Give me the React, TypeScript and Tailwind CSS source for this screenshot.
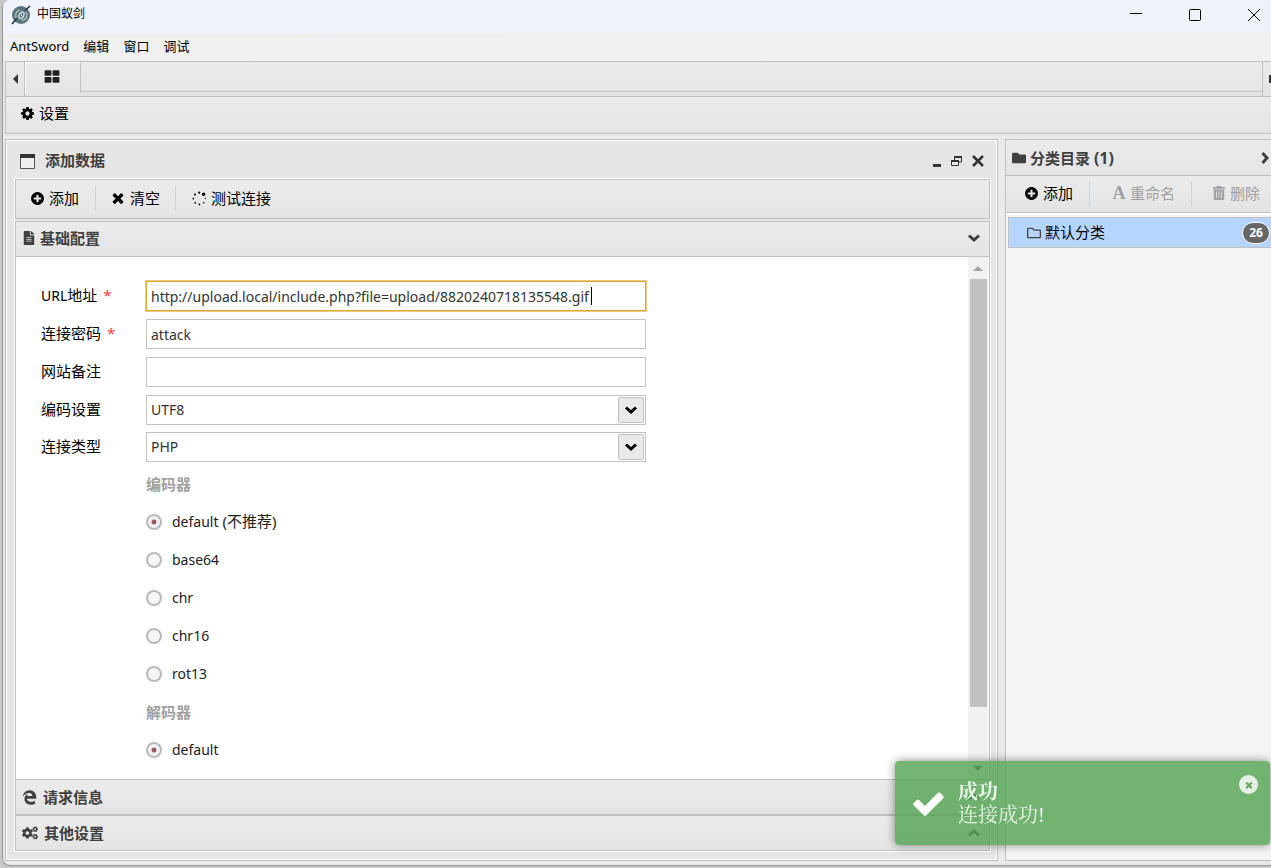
import React from "react";
import {
  FaCogs,
  FaEdgeLegacy,
  FaFileAlt,
  FaFolder,
  FaRegFolder,
  FaTrashAlt,
} from "react-icons/fa";

const paths = {
  times:
    "M1490 1322q0 40-28 68l-136 136q-28 28-68 28t-68-28l-294-294-294 294q-28 28-68 28t-68-28l-136-136q-28-28-28-68t28-68l294-294-294-294q-28-28-28-68t28-68l136-136q28-28 68-28t68 28l294 294 294-294q28-28 68-28t68 28l136 136q28 28 28 68t-28 68l-294 294 294 294q28 28 28 68z",
  plus: "M1344 960v-128q0-26-19-45t-45-19h-256v-256q0-26-19-45t-45-19h-128q-26 0-45 19t-19 45v256h-256q-26 0-45 19t-19 45v128q0 26 19 45t45 19h256v256q0 26 19 45t45 19h128q26 0 45-19t19-45v-256h256q26 0 45-19t19-45zm320-64q0 209-103 385.5t-279.5 279.5-385.5 103-385.5-103-279.5-279.5-103-385.5 103-385.5 279.5-279.5 385.5-103 385.5 103 279.5 279.5 103 385.5z",
  tiles:
    "M832 1024v384q0 52-38 90t-90 38h-512q-52 0-90-38t-38-90v-384q0-52 38-90t90-38h512q52 0 90 38t38 90zm0-768v384q0 52-38 90t-90 38h-512q-52 0-90-38t-38-90v-384q0-52 38-90t90-38h512q52 0 90 38t38 90zm896 768v384q0 52-38 90t-90 38h-512q-52 0-90-38t-38-90v-384q0-52 38-90t90-38h512q52 0 90 38t38 90zm0-768v384q0 52-38 90t-90 38h-512q-52 0-90-38t-38-90v-384q0-52 38-90t90-38h512q52 0 90 38t38 90z",
  cog: "M1152 896q0-106-75-181t-181-75-181 75-75 181 75 181 181 75 181-75 75-181zm512-109v222q0 12-8 23t-20 13l-185 28q-19 54-39 91 35 50 107 138 10 12 10 25t-9 23q-27 37-99 108t-94 71q-12 0-26-9l-138-108q-44 23-91 38-16 136-29 186-7 28-36 28h-222q-14 0-24.5-8.5t-11.5-21.5l-28-184q-49-16-90-37l-141 107q-10 9-25 9-14 0-25-11-126-114-165-168-7-10-7-23 0-12 8-23 15-21 51-66.5t54-70.5q-27-50-41-99l-183-27q-13-2-21-12.5t-8-23.5v-222q0-12 8-23t19-13l186-28q14-46 39-92-40-57-107-138-10-12-10-24 0-10 9-23 26-36 98.5-107.5t94.5-71.5q13 0 26 10l138 107q44-23 91-38 16-136 29-186 7-28 36-28h222q14 0 24.5 8.5t11.5 21.5l28 184q49 16 90 37l142-107q9-9 24-9 13 0 25 10 129 119 165 170 7 8 7 22 0 12-8 23-15 21-51 66.5t-54 70.5q26 50 41 98l183 28q13 2 21 12.5t8 23.5z",
  check:
    "M1671 566q0 40-28 68l-724 724-136 136q-28 28-68 28t-68-28l-136-136-362-362q-28-28-28-68t28-68l136-136q28-28 68-28t68 28l294 295 656-657q28-28 68-28t68 28l136 136q28 28 28 68z",
};

function Icon({ name, className }: { name: keyof typeof paths; className?: string }) {
  return (
    <svg viewBox="0 0 1792 1792" fill="currentColor" className={className} aria-hidden="true">
      <path d={paths[name]} />
    </svg>
  );
}

function Chevron({ className }: { className?: string }) {
  return (
    <svg viewBox="0 0 12 8" fill="none" stroke="currentColor" strokeWidth="3" className={className} aria-hidden="true">
      <path d="M1 1.5 6 6l5-4.5" />
    </svg>
  );
}

function Spinner() {
  return (
    <svg viewBox="0 0 15 15" fill="currentColor" className="size-[15px]" aria-hidden="true">
      <circle cx="11.6" cy="3.2" r="1.7" />
      <circle cx="7.2" cy="1.7" r="1.1" />
      <circle cx="3" cy="3.4" r="1" />
      <circle cx="1.3" cy="7.6" r=".9" />
      <circle cx="3.2" cy="11.8" r=".9" />
      <circle cx="7.4" cy="13.4" r=".9" />
      <circle cx="11.7" cy="11.8" r=".8" />
      <circle cx="13.4" cy="7.6" r=".7" />
    </svg>
  );
}

function Logo() {
  return (
    <svg viewBox="0 0 20 20" className="size-5" aria-hidden="true">
      <circle cx="10" cy="10" r="9" fill="#5b7580" />
      <path d="M6 14A5.5 5.5 0 0 1 9 5M11 15.5a5.5 5.5 0 0 0 4-8.5" fill="none" stroke="#b9c8ce" strokeWidth="1.2" />
      <ellipse cx="10.5" cy="10" rx="2.3" ry="3.5" fill="none" stroke="#d5e0e4" strokeWidth="1.3" transform="rotate(25 10 10)" />
      <path d="M1 19 6 13M14 5.500 19 1" stroke="#26343a" strokeWidth="1.6" />
      <path d="M10.5 8.5v3" stroke="#d5e0e4" />
    </svg>
  );
}

const menus = ["AntSword", "编辑", "窗口", "调试"];
const encoders = [
  { name: "default", note: "不推荐" },
  { name: "base64" },
  { name: "chr" },
  { name: "chr16" },
  { name: "rot13" },
];
const decoders = [{ name: "default" }];

const bar = "bg-linear-to-b from-[#ebebeb] to-[#e4e4e4] border-[#c0c0c0]";

function Divider() {
  return <span className="h-[25px] w-px bg-[#c7d3da]" />;
}

type FieldProps = {
  id: string;
  label: React.ReactNode;
  required?: boolean;
  value?: string;
  focused?: boolean;
};

function FieldLabel({ id, label, required }: FieldProps) {
  return (
    <label htmlFor={id} className="w-[105px] shrink-0 text-[15px] text-black">
      {label}
      {required && <span className="ml-1.5 text-[#ff4040]">*</span>}
    </label>
  );
}

function TextField(props: FieldProps) {
  return (
    <div className="flex h-[38px] items-center">
      <FieldLabel {...props} />
      {props.focused ? (
        <div className="relative">
          <input
            id={props.id}
            defaultValue={props.value}
            className="block h-[30px] w-[500px] border border-[#dfa82f] bg-white px-1 ring-1 ring-[#dfa82f]/60 outline-none"
          />
          <span className="absolute top-1.5 left-[445px] h-[18px] w-px bg-black" />
        </div>
      ) : (
        <input
          id={props.id}
          defaultValue={props.value}
          className="h-[30px] w-[500px] border border-[#c0c0c0] bg-white px-1 outline-none"
        />
      )}
    </div>
  );
}

function SelectField(props: FieldProps) {
  return (
    <div className="flex h-[37px] items-center">
      <FieldLabel {...props} />
      <div className="relative">
        <select
          id={props.id}
          className="block h-[30px] w-[500px] appearance-none border border-[#c0c0c0] bg-white px-1 outline-none"
        >
          <option>{props.value}</option>
        </select>
        <span className="pointer-events-none absolute top-0.5 right-0.5 grid h-[26px] w-[26px] place-items-center rounded-xs border border-[#c0c0c0] bg-[#e9e9e9] text-black">
          <Chevron className="h-2 w-3" />
        </span>
      </div>
    </div>
  );
}

type Coder = { name: string; note?: string };

function RadioGroup({ title, name, items }: { title: string; name: string; items: Coder[] }) {
  return (
    <fieldset className="pl-[105px]">
      <legend className="h-[38px] text-[15px] leading-[38px] font-bold text-[#a0a0a0]">{title}</legend>
      {items.map((item, i) => (
        <label key={item.name} className="flex h-[38px] items-center gap-2.5 text-[#222]">
          <input
            type="radio"
            name={name}
            defaultChecked={i === 0}
            className="size-4 appearance-none rounded-full border-2 border-[#bdb8bb] bg-[#f5f5f5] checked:bg-[radial-gradient(#95585b_2px,#f0f2f6_3px)]"
          />
          <span>
            {item.name}
            {item.note && <span className="text-[15px]"> ({item.note})</span>}
          </span>
        </label>
      ))}
    </fieldset>
  );
}

function AddPanel() {
  return (
    <section className="flex min-w-0 flex-1 flex-col border border-[#c0c0c0] bg-[#e6e6e6] p-px ring-1 ring-white ring-inset">
      <header className="flex h-[37px] shrink-0 items-center pt-0.5 pr-3 pl-[13px] font-bold text-[#404040]">
        <svg viewBox="0 0 15 15" className="mt-0.5 mr-2.5 size-[15px]" aria-hidden="true">
          <path d="M.5.5h14v14H.5z" fill="#efefef" stroke="#555" />
          <path d="M0 0h15v4H0z" fill="#333" />
        </svg>
        <h2 className="flex-1">添加数据</h2>
        <div className="flex items-center gap-2.5 text-[#333]">
          <button aria-label="最小化" className="flex h-3 w-2 items-end">
            <span className="h-[3px] w-full bg-current" />
          </button>
          <button aria-label="还原">
            <svg viewBox="0 0 11 10" className="h-2.5 w-[11px]" fill="none" stroke="currentColor" aria-hidden="true">
              <path d="M3.5 4V1h7v5H8M.5 4.5h7v5h-7z" />
              <path d="M3 1h8M0 5h8" strokeWidth="2" />
            </svg>
          </button>
          <button aria-label="关闭">
            <svg viewBox="0 0 12 12" className="size-3" stroke="currentColor" strokeWidth="2.5" aria-hidden="true">
              <path d="m1 1 10 10M11 1 1 11" />
            </svg>
          </button>
        </div>
      </header>
      <div className="mr-[5px] mb-[7px] ml-[7px] flex min-h-0 flex-1 flex-col border border-white">
        <div className={`flex h-10 shrink-0 items-center border px-3.5 pb-0.5 text-black ${bar}`}>
          <button className="flex items-center gap-1 pr-4">
            <Icon name="plus" className="size-[15px]" />
            添加
          </button>
          <Divider />
          <button className="flex items-center gap-1 pr-[15px] pl-3.5">
            <Icon name="times" className="size-4" />
            清空
          </button>
          <Divider />
          <button className="flex items-center gap-1 pl-4">
            <Spinner />
            测试连接
          </button>
        </div>
        <button className={`mt-0.5 flex h-9 shrink-0 items-center gap-1 border px-1.5 pb-0.5 font-bold text-[#404040] ${bar}`}>
          <FaFileAlt className="size-3.5" />
          基础配置
          <Chevron className="mr-[3px] ml-auto h-2 w-3" />
        </button>
        <div className="flex min-h-0 flex-1 border-x border-[#c0c0c0] bg-white">
          <form className="flex-1 overflow-hidden pt-5 pl-[25px] text-sm">
            <TextField
              id="url"
              label={
                <>
                  <span className="text-sm">URL</span>地址
                </>
              }
              required
              focused
              value="http://upload.local/include.php?file=upload/8820240718135548.gif"
            />
            <TextField id="pwd" label="连接密码" required value="attack" />
            <TextField id="note" label="网站备注" />
            <SelectField id="encode" label="编码设置" value="UTF8" />
            <SelectField id="type" label="连接类型" value="PHP" />
            <RadioGroup title="编码器" name="encoder" items={encoders} />
            <RadioGroup title="解码器" name="decoder" items={decoders} />
          </form>
          <div className="mr-px flex w-5 flex-col items-center bg-[#f1f1f1] pb-2">
            <span className="mt-[9px] border-x-5 border-b-5 border-x-transparent border-b-[#a3a3a3]" />
            <span className="mt-2 h-[428px] w-[17px] bg-[#c1c1c1]" />
            <span className="mt-auto border-x-5 border-t-5 border-x-transparent border-t-[#505050]" />
          </div>
        </div>
        <button className={`flex h-9 shrink-0 items-center gap-1.5 border px-1.5 font-bold text-[#404040] ${bar}`}>
          <FaEdgeLegacy className="size-[15px]" />
          请求信息
          <Chevron className="mr-[3px] ml-auto h-2 w-3 rotate-180" />
        </button>
        <button className={`flex h-9 shrink-0 items-center gap-1.5 border px-1.5 font-bold text-[#404040] ${bar}`}>
          <FaCogs className="size-4" />
          其他设置
          <Chevron className="mr-[3px] ml-auto h-2 w-3 rotate-180" />
        </button>
      </div>
    </section>
  );
}

function CategoryPanel() {
  return (
    <aside className="flex w-[266px] shrink-0 flex-col border border-r-0 border-[#c0c0c0] bg-[#f4f4f4]">
      <header className={`flex h-9 shrink-0 items-center gap-1 border-b pl-1.5 font-bold text-[#404040] ${bar}`}>
        <FaFolder className="size-3.5" />
        <h2 className="flex-1">
          分类目录 <span className="text-base">(1)</span>
        </h2>
        <Chevron className="h-2 w-3 -rotate-90" />
      </header>
      <div className={`flex h-[37px] shrink-0 items-center border-b pb-0.5 text-black ${bar}`}>
        <button className="flex items-center gap-1 pr-4 pl-[18px]">
          <Icon name="plus" className="size-[15px]" />
          添加
        </button>
        <Divider />
        <button disabled className="flex items-center gap-1 pr-4 pl-[22px] text-[#a0a0a0]">
          <span className="w-3.5 text-center font-['Liberation_Serif',serif] text-lg leading-5 font-bold" aria-hidden="true">
            A
          </span>
          重命名
        </button>
        <Divider />
        <button disabled className="flex items-center gap-1 pl-5 text-[#a0a0a0]">
          <FaTrashAlt className="size-3.5" />
          删除
        </button>
      </div>
      <ul className="border-t-2 border-white p-0.5 pr-0">
        <li className="flex h-[31px] items-center gap-1 border border-r-0 border-[#c0c0c0] bg-[#b5d5ff] pr-px pl-[18px] text-black">
          <FaRegFolder className="size-3.5 text-[#444]" />
          <span className="flex-1">默认分类</span>
          <span className="flex h-[22px] w-7 items-center justify-center rounded-full border border-white bg-[#666] text-xs font-bold text-white">
            26
          </span>
        </li>
      </ul>
    </aside>
  );
}

function Toast() {
  return (
    <div
      role="status"
      className="fixed right-px bottom-[23px] flex h-[84px] w-[375px] items-center rounded bg-[#51a351]/80 pl-4 font-['Liberation_Serif','Noto_Serif_CJK_SC','Noto_Sans_CJK_SC',serif] text-xl leading-[23px] text-white/85 shadow-[0_0_10px_rgba(0,0,0,0.45)]"
    >
      <Icon name="check" className="mr-3 size-[35px] text-white" />
      <div className="pt-0.5">
        <strong className="block">成功</strong>
        <p>连接成功!</p>
      </div>
      <button aria-label="关闭提示" className="absolute top-3.5 right-3 grid size-[19px] place-items-center rounded-full bg-white/80 text-[#62a762]">
        <Icon name="times" className="size-2.5" />
      </button>
    </div>
  );
}

export default function App() {
  return (
    <div className="h-screen overflow-hidden bg-[#c8c8c8] pb-0.5 pl-0.5 font-['Noto_Sans','Noto_Sans_CJK_SC',sans-serif] text-[15px] text-[#333]">
      <div className="flex h-full flex-col overflow-hidden rounded-l-lg border-b border-l border-[#999] bg-[#e9e9e9]">
        <header className="flex h-[33px] shrink-0 items-center bg-linear-to-r from-[#f0f3fb] to-[#edf3f8] pb-1 pl-2 text-black">
          <Logo />
          <h1 className="ml-1.5 flex-1 pb-0.5 text-xs">中国蚁剑</h1>
          <div className="flex gap-[47px] pr-[11px]">
            <button aria-label="最小化窗口">
              <svg viewBox="0 0 12 12" className="size-3" stroke="currentColor" aria-hidden="true">
                <path d="M0 4.5h12" />
              </svg>
            </button>
            <button aria-label="最大化窗口">
              <svg viewBox="0 0 12 12" className="size-3" fill="none" stroke="currentColor" aria-hidden="true">
                <rect x=".5" y=".5" width="11" height="11" rx="1" />
              </svg>
            </button>
            <button aria-label="关闭窗口">
              <svg viewBox="0 0 12 12" className="size-3" stroke="currentColor" aria-hidden="true">
                <path d="m0 0 12 12M12 0 0 12" />
              </svg>
            </button>
          </div>
        </header>
        <nav className="flex h-7 shrink-0 items-center gap-3.5 bg-[#f0f0f0] pl-[7px] text-[13px] text-black">
          {menus.map((m) => (
            <button key={m}>{m}</button>
          ))}
        </nav>

        <div className="flex min-h-0 flex-1 flex-col pb-1 pl-0.5">
          <div className={`flex h-9 shrink-0 border-y border-l text-[#222] ${bar}`}>
            <button aria-label="向左" className="grid w-[19px] place-items-center border-r border-[#c0c0c0]">
              <span className="border-y-5 border-r-5 border-y-transparent border-r-[#333]" />
            </button>
            <button aria-label="主页" className="grid h-[31px] w-14 place-items-center border-x border-t border-white border-r-[#c0c0c0] pr-0.5 pb-0.5">
              <Icon name="tiles" className="size-4" />
            </button>
            <div className="h-[30px] flex-1 border-b border-[#c0c0c0]" />
            <button aria-label="向右" className="flex w-[9px] items-center justify-end overflow-hidden border-l border-[#c0c0c0]">
              <span className="h-2 w-0.5 bg-[#333]" />
            </button>
          </div>
          <div className={`flex h-[37px] shrink-0 items-center border-b border-l pb-1 pl-3.5 text-black ${bar}`}>
            <button className="flex items-center gap-1">
              <Icon name="cog" className="size-[15px]" />
              设置
            </button>
          </div>
          <main className="mt-[5px] flex min-h-0 flex-1 gap-[7px]">
            <AddPanel />
            <CategoryPanel />
          </main>
        </div>
      </div>
      <Toast />
    </div>
  );
}
